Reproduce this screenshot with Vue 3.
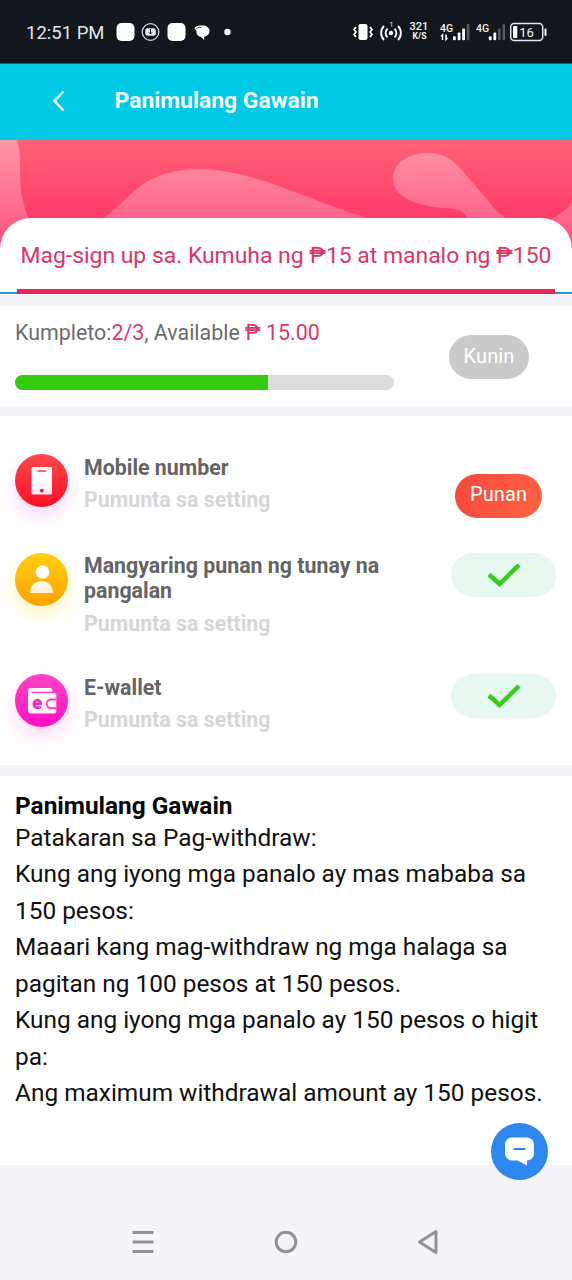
<script setup>
const tasks = [
  { kind: 'phone', title: 'Mobile number', done: false },
  { kind: 'person', title: 'Mangyaring punan ng tunay na pangalan', done: true },
  { kind: 'wallet', title: 'E-wallet', done: true },
]
const rules = [
  'Patakaran sa Pag-withdraw:',
  'Kung ang iyong mga panalo ay mas mababa sa 150 pesos:',
  'Maaari kang mag-withdraw ng mga halaga sa pagitan ng 100 pesos at 150 pesos.',
  'Kung ang iyong mga panalo ay 150 pesos o higit pa:',
  'Ang maximum withdrawal amount ay 150 pesos.',
]
const completed = 2
const total = 3
</script>

<template>
  <div class="screen">
    <div class="status">
      <span class="clock">12:51 PM</span>
      <svg class="notifications" width="120" height="24" viewBox="0 0 120 24">
        <rect x="1.500" y="3" width="18" height="18" rx="5" fill="#fff" />
        <circle cx="35.500" cy="12" r="8.300" fill="none" stroke="#d5d7d9" stroke-width="1.300" />
        <rect x="30.300" y="8.200" width="10.500" height="7.600" rx="2.200" fill="#e8e9ea" />
        <path d="M35.500 9v5M33.800 12.300l1.700 1.700 1.700-1.700" fill="none" stroke="#12161d" stroke-width="1" />
        <rect x="52.500" y="3" width="18" height="18" rx="5" fill="#fff" />
        <path d="M79.500 8.500c1-2.600 4-3.200 7-2.900 4.600-.4 7.500 1.600 8 5.200.2 3.300-2.400 5.500-5.300 6v3.100l-3.500-3.200c-3.500-.8-4.500-3-4.200-5.800" fill="#fff" />
        <path d="M80.500 9.600c1-1.800 3.600-2.400 6-2.300" fill="none" stroke="#12161d" stroke-width=".7" />
        <circle cx="112.500" cy="12" r="3.200" fill="#fff" />
      </svg>
      <svg class="system" width="204" height="36" viewBox="348 14 204 36">
        <rect x="358.500" y="24" width="9" height="16" rx="2" fill="#fff" />
        <path d="M356 27l-2 2.500 2 2.500-2 2.500 2 2.500M370 27l2 2.500-2 2.500 2 2.500-2 2.500" fill="none" stroke="#fff" stroke-width="1.700" />
        <circle cx="391" cy="33" r="2.200" fill="#fff" />
        <path d="M387.500 28.700a5.800 5.800 0 0 0 0 8.600M394.500 28.700a5.800 5.800 0 0 1 0 8.600M384 26a10 10 0 0 0 0 14M398 26a10 10 0 0 1 0 14" fill="none" stroke="#fff" stroke-width="1.900" />
        <text x="391.500" y="26.500" font-size="7" text-anchor="middle">1</text>
        <text x="419" y="30.300" font-size="11" font-weight="500" text-anchor="middle">321</text>
        <text x="419.500" y="39" font-size="8.500" font-weight="700" text-anchor="middle">K/S</text>
        <text x="440" y="31.500" font-size="10.500" font-weight="500">4G</text>
        <path d="M442.500 40v-5l-1.500 1.500M446 34.500v5l1.500-1.500" fill="none" stroke="#fff" stroke-width="1.500" />
        <g fill="#fff">
          <rect x="453" y="36.300" width="2.800" height="4" rx="1" />
          <rect x="457.700" y="32.500" width="2.800" height="7.800" rx="1" />
          <rect x="462.200" y="28.500" width="2.800" height="11.800" rx="1" />
          <rect x="466.800" y="24" width="2.600" height="16.300" rx="1" fill="#555960" />
          <rect x="488.800" y="36.300" width="2.800" height="4" rx="1" />
          <rect x="493.400" y="32.500" width="2.800" height="7.800" rx="1" />
          <rect x="498" y="28.500" width="2.600" height="11.800" rx="1" fill="#555960" />
          <rect x="502.500" y="24" width="2.600" height="16.300" rx="1" fill="#555960" />
          <rect x="513" y="26" width="4.300" height="12" rx="1" />
          <rect x="544.500" y="28.500" width="2" height="7.500" rx="1" />
        </g>
        <text x="476" y="31.500" font-size="10.500" font-weight="500">4G</text>
        <rect x="510.700" y="23.500" width="32" height="17" rx="3.500" fill="none" stroke="#e6e7e8" stroke-width="1.500" />
        <text x="519.300" y="36.500" font-size="13">16</text>
      </svg>
    </div>

    <header class="bar">
      <svg class="back" width="14" height="22" viewBox="0 0 14 22"><path d="M11.500 1.500L2.500 11l9 9.500" /></svg>
      <h1>Panimulang Gawain</h1>
    </header>

    <div class="hero">
      <svg class="waves" width="572" height="110" viewBox="0 140 572 110">
        <defs>
          <linearGradient id="pale" x1="0" y1="140" x2="0" y2="250" gradientUnits="userSpaceOnUse">
            <stop offset="0" stop-color="#ff97a5" />
            <stop offset=".7" stop-color="#ff658a" />
            <stop offset="1" stop-color="#ff4a78" />
          </linearGradient>
        </defs>
        <g fill="url(#pale)">
          <path d="M0 140H17C22 157 19 173 21 190C23 204 26 212 30 222V250H0Z" />
          <path d="M98 222C120 208 130 192 146 182C174 166 207 167 239 174C286 185 329 208 380 222Z" />
          <path d="M393 178C394 161 411 152 431 153C445 154 452 160 460 168L494 208C500 215 506 219 514 222H470C466 214 462 210 454 209C427 207 393 202 393 178Z" />
          <path d="M572 202C567 210 556 218 544 222V250H572Z" />
        </g>
      </svg>
      <div class="tabs"><div class="tab"><span>Mag-sign up sa. Kumuha ng ₱15 at manalo ng ₱150</span></div></div>
    </div>

    <section class="progress">
      <div class="summary">
        <p>Kumpleto:<b>{{ completed }}/{{ total }}</b>, Available <b>₱ 15.00</b></p>
        <div class="track"><div class="fill" :style="{ width: (completed / total) * 100 + '%' }"></div></div>
      </div>
      <button class="pill claim">Kunin</button>
    </section>

    <section class="tasks">
      <div v-for="task in tasks" :key="task.kind" class="task" :class="task.kind">
        <div class="badge">
          <svg width="53" height="53" viewBox="0 0 53 53">
            <defs>
              <linearGradient :id="'ink-' + task.kind" x1="0" y1="12" x2="0" y2="42" gradientUnits="userSpaceOnUse">
                <stop offset=".5" stop-color="#fff" />
                <stop offset="1" :stop-color="task.kind === 'person' ? '#ffedc5' : '#ffe3ee'" />
              </linearGradient>
            </defs>
            <g v-if="task.kind === 'phone'">
              <rect x="16.500" y="13" width="20.500" height="27.500" rx="1.500" fill="url(#ink-phone)" />
              <path d="M23 17h7.500" stroke="#fb3540" stroke-width="1.500" stroke-linecap="round" />
              <circle cx="26.800" cy="36.600" r="1.900" fill="#e71c32" />
            </g>
            <g v-else-if="task.kind === 'person'" fill="url(#ink-person)">
              <circle cx="27.500" cy="19" r="6.800" />
              <path d="M15 40C15.500 32 20 28.200 26.500 28.200S37.500 32 38 40Z" />
            </g>
            <g v-else>
              <path d="M16 14H35a2.300 2.300 0 0 1 2.300 2.300V19H39a2.300 2.300 0 0 1 2.300 2.300V37a2.500 2.500 0 0 1-2.500 2.500H16a3 3 0 0 1-3-3V17a3 3 0 0 1 3-3Z" fill="url(#ink-wallet)" />
              <path d="M17 18.500H38" stroke="#ff3fcb" stroke-width="1.600" stroke-linecap="round" />
              <path d="M41.300 25.500H36a4.200 4.200 0 0 0 0 8.600H41.300" fill="none" stroke="#f93abd" stroke-width="1.800" />
              <text x="17.300" y="34.800" class="coin">e</text>
            </g>
          </svg>
        </div>
        <div class="label">
          <h3>{{ task.title }}</h3>
          <p>Pumunta sa setting</p>
        </div>
        <button v-if="!task.done" class="pill go">Punan</button>
        <div v-else class="pill done">
          <svg width="34" height="24" viewBox="0 0 34 24"><path d="M2 11.500L12.500 21L32 2" /></svg>
        </div>
      </div>
    </section>

    <section class="rules">
      <h2>Panimulang Gawain</h2>
      <p v-for="rule in rules" :key="rule">{{ rule }}</p>
    </section>

    <nav class="nav">
      <svg width="26" height="26" viewBox="0 0 26 26"><path d="M2.500 3.500h21M2.500 13h21M2.500 22.500h21" /></svg>
      <svg width="26" height="26" viewBox="0 0 26 26"><circle cx="13" cy="13" r="9.800" /></svg>
      <svg width="26" height="26" viewBox="0 0 26 26"><path d="M20 2.500V23.500L3.500 13Z" stroke-linejoin="round" /></svg>
    </nav>

    <div class="chat">
      <svg width="57" height="57" viewBox="0 0 57 57">
        <path d="M21 14.500H36a7 7 0 0 1 7 7V30.500a7 7 0 0 1-7 7V42.500L26.500 37.500H21a7 7 0 0 1-7-7V21.500a7 7 0 0 1 7-7Z" fill="#fff" />
        <path d="M23.500 26h10" stroke="#2d87ee" stroke-width="2.200" stroke-linecap="round" />
      </svg>
    </div>
  </div>
</template>

<style>
body { margin: 0; }
</style>

<style scoped>
.screen { position: relative; display: flex; flex-direction: column; width: 572px; height: 1280px; overflow: hidden; background: #f4f4f9; font-family: Roboto, "Noto Sans", sans-serif; }
.screen * { box-sizing: border-box; }
h1, h2, h3, p { margin: 0; }
svg { display: block; flex: none; }
button { border: 0; padding: 0; font: inherit; }

.status { display: flex; align-items: center; height: 64px; background: #12161d; border-bottom: 1px solid #116475; }
.clock { width: 79px; margin-left: 26px; padding-top: 2px; color: #e3e5e7; font-size: 18.500px; white-space: nowrap; }
.notifications { margin-left: 10px; }
.system { margin-left: 113px; }
.system text { fill: #f2f3f4; }

.bar { display: flex; align-items: center; height: 76px; padding: 0 0 3px 52px; background: #00c9e4; color: #f3feff; }
.back { margin-top: 1px; fill: none; stroke: #effdff; stroke-width: 2.500; }
h1 { margin-left: 48.500px; font-size: 22.900px; font-weight: 700; white-space: nowrap; }

.hero { display: flex; align-items: flex-end; position: relative; height: 155px; background: linear-gradient(#ff6276 0, #ff3a69 80px); }
.waves { position: absolute; top: 0; left: 0; }
.tabs { position: relative; width: 572px; height: 77px; padding: 0 17px; border-radius: 31px 31px 0 0; background: linear-gradient(#2d94d4, #2d94d4) 0 74px / 100% 2px no-repeat, #fff; }
.tab { display: flex; justify-content: center; height: 76px; padding-top: 23px; border-bottom: 5px solid #ec2457; color: #dc3465; font-size: 22.900px; line-height: 29px; white-space: nowrap; }

.progress { display: flex; justify-content: space-between; height: 99.500px; margin-top: 11px; padding: 13px 43px 0 15px; background: #fff; }
.summary { width: 379px; color: #6c6c6c; font-size: 21.400px; line-height: 28px; }
.summary b { color: #df3766; font-weight: 400; }
.track { height: 15px; margin-top: 28px; overflow: hidden; border-radius: 8px; background: #dcdcdc; }
.fill { height: 100%; background: #33cc0c; }
.pill { display: flex; justify-content: center; height: 44px; border-radius: 22px; color: #fff; font-size: 20px; line-height: 42px; letter-spacing: .1px; }
.claim { width: 80px; margin-top: 16px; background: #cacaca; }

.tasks { display: flex; flex-direction: column; height: 349px; margin-top: 10.500px; background: #fff; }
.task { display: flex; align-items: flex-start; padding: 0 16px 0 15px; }
.phone { height: 99px; margin-top: 38px; }
.person { height: 121px; }
.badge { width: 53px; height: 53px; border-radius: 50%; }
.phone .badge { background: linear-gradient(#ff484b, #ff1027); box-shadow: 0 9px 17px #d75bff38; }
.person .badge { background: linear-gradient(#ffd012, #ffa100); box-shadow: 0 9px 17px #ffe60045; }
.wallet .badge { background: linear-gradient(#ff45c4, #ff0fc4); box-shadow: 0 9px 17px #ff3dd030; }
.coin { fill: #f32dbb; stroke: #f32dbb; stroke-width: .4; font: 900 18px Roboto, sans-serif; }
.label { width: 330px; margin-left: 16px; padding-top: 1px; font-size: 21.350px; font-weight: 700; }
.person .label { padding-top: 0; }
h3 { color: #646464; font-size: 21.350px; line-height: 25px; font-weight: 700; }
.label p { margin-top: 6px; color: #d6d6d6; line-height: 27px; }
.person .label p { margin-top: 7px; }
.go { width: 87px; margin: 20px 14px 0 auto; line-height: 40px; background: linear-gradient(115deg, #f8483e, #fd6541); }
.done { align-items: center; width: 105px; margin-left: auto; background: #e6f8ef; }
.done svg { fill: none; stroke: #36cc17; stroke-width: 4.500; }

.rules { height: 389px; margin-top: 11px; padding: 15px 15px 0; background: #fff; color: #101010; font-size: 24.400px; line-height: 36.500px; }
h2 { margin-bottom: -1.500px; color: #050505; font-size: 24.400px; line-height: 30px; }

.nav { display: flex; justify-content: center; gap: 117px; padding-top: 64px; }
.nav svg { fill: none; stroke: #929297; stroke-width: 3; }
.chat { position: absolute; top: 1122.500px; left: 491px; width: 57px; height: 57px; border-radius: 50%; background: #2d87ee; }
</style>
